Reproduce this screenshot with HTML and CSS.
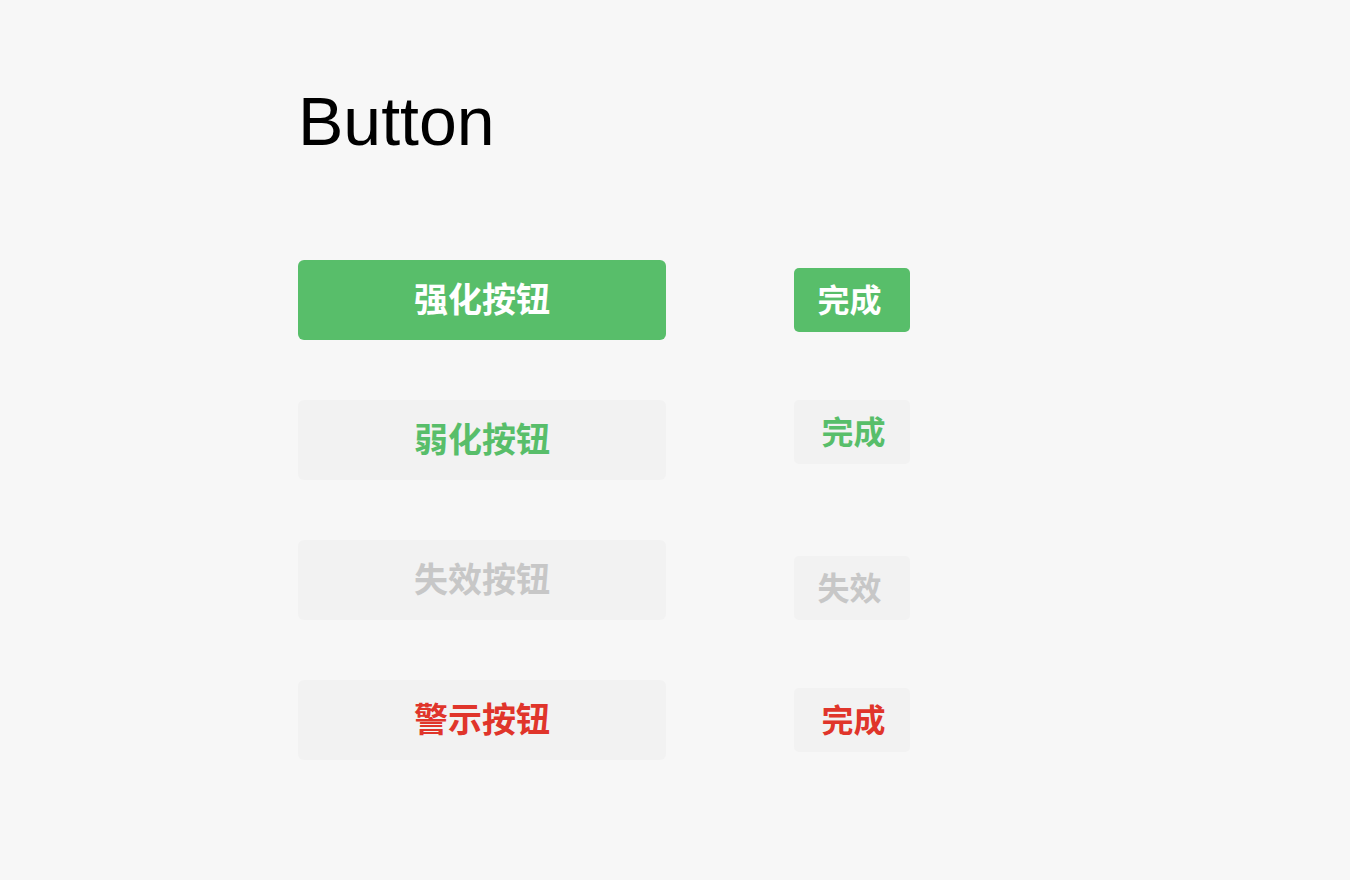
FILE: index.html
```html
<!DOCTYPE html>
<html lang="zh">
<head>
<meta charset="utf-8">
<title>Button</title>
<link rel="stylesheet" href="styles.css">
</head>
<body>
<main class="page">
  <h1 class="title">Button</h1>
  <div class="grid">
    <div class="btn btn-primary">强化按钮</div>
    <div class="mini mini-primary self-center lean-left">完成</div>

    <div class="btn btn-default">弱化按钮</div>
    <div class="mini mini-default self-start lean-right">完成</div>

    <div class="btn btn-disabled">失效按钮</div>
    <div class="mini mini-disabled self-end lean-left">失效</div>

    <div class="btn btn-warn">警示按钮</div>
    <div class="mini mini-warn self-center lean-right">完成</div>
  </div>
</main>
</body>
</html>
```

FILE: styles.css
```css
html, body {
  margin: 0;
  padding: 0;
  background: #f7f7f7;
}

.page {
  padding: 87px 0 0 298px;
  font-family: "Noto Sans CJK SC", "Liberation Sans", sans-serif;
}

.title {
  margin: 0;
  font-family: "Liberation Sans", Arial, sans-serif;
  font-weight: 400;
  font-size: 68px;
  line-height: 68px;
  color: #000;
}

.grid {
  margin-top: 105px;
  display: grid;
  grid-template-columns: 368px 116px;
  grid-auto-rows: 80px;
  column-gap: 128px;
  row-gap: 60px;
}

.btn,
.mini {
  display: flex;
  align-items: center;
  justify-content: center;
  font-weight: 700;
  box-sizing: border-box;
}

.btn {
  height: 80px;
  border-radius: 6px;
  font-size: 34px;
  padding-bottom: 5px;
  background: #f2f2f2;
}

.mini {
  height: 64px;
  border-radius: 5px;
  font-size: 32px;
  padding-bottom: 5px;
  background: #f2f2f2;
}

.btn-primary,
.mini-primary {
  background: #58be6a;
  color: #fff;
}

.btn-default,
.mini-default {
  color: #58be6a;
}

.btn-disabled,
.mini-disabled {
  color: #c7c7c7;
}

.btn-warn,
.mini-warn {
  color: #e0352b;
}

.self-start { align-self: start; }
.self-center { align-self: center; }
.self-end { align-self: end; }

.lean-left {
  padding-right: 5px;
}

.lean-right {
  padding-left: 3px;
}
```
